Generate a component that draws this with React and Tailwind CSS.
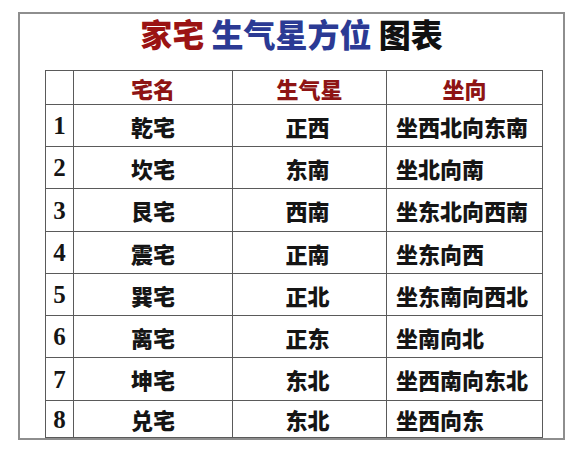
import React from 'react';

const rows = [
    ['1', '乾宅', '正西', '坐西北向东南'],
    ['2', '坎宅', '东南', '坐北向南'],
    ['3', '艮宅', '西南', '坐东北向西南'],
    ['4', '震宅', '正南', '坐东向西'],
    ['5', '巽宅', '正北', '坐东南向西北'],
    ['6', '离宅', '正东', '坐南向北'],
    ['7', '坤宅', '东北', '坐西南向东北'],
    ['8', '兑宅', '东北', '坐西向东'],
];

const heights = ['h-[42px]', 'h-[42px]', 'h-[43px]', 'h-[42px]', 'h-[42px]', 'h-[42px]', 'h-[43px]', 'h-[37px]'];

const cjk = { fontFamily: '"Noto Sans CJK SC", sans-serif' };
const serif = { fontFamily: '"Liberation Serif", "Noto Sans CJK SC", serif' };

export default function App() {
    return (
        <div className="w-[574px] h-[449px] bg-white pt-[12px] pl-[18px]">
            <div className="w-[547px] h-[428px] border-2 border-[#8e8e8e] flex flex-col">
                {/* Title */}
                <div
                    className="h-[56px] pt-[3px] text-center text-[32px] leading-[32px] font-black"
                    style={cjk}
                >
                    <span className="text-[#9b1313]">家宅</span>
                    <span className="text-[#2b3a94]"> 生气星方位</span>
                    <span className="text-[#111]"> 图表</span>
                </div>

                <table
                    className="ml-[25px] w-[497px] border-collapse table-fixed text-[22px] font-black text-[#151515]"
                    style={cjk}
                >
                    <colgroup>
                        <col className="w-[28px]" />
                        <col className="w-[159px]" />
                        <col className="w-[154px]" />
                        <col className="w-[156px]" />
                    </colgroup>
                    <thead>
                        <tr className="h-[34px] text-[#8e1414]">
                            <th className="border border-[#5a5a5a] p-0" />
                            <th className="border border-[#5a5a5a] p-0 font-black leading-none">宅名</th>
                            <th className="border border-[#5a5a5a] p-0 font-black leading-none">生气星</th>
                            <th className="border border-[#5a5a5a] p-0 font-black leading-none">坐向</th>
                        </tr>
                    </thead>
                    <tbody>
                        {rows.map((r, i) => (
                            <tr key={r[0]} className={heights[i]}>
                                <td className="border border-[#5a5a5a] p-0 text-center text-[25px] font-bold leading-none" style={serif}>
                                    {r[0]}
                                </td>
                                <td className="border border-[#5a5a5a] p-0 text-center leading-none">{r[1]}</td>
                                <td className="border border-[#5a5a5a] p-0 text-center leading-none pr-[4px]">{r[2]}</td>
                                <td className="border border-[#5a5a5a] p-0 pl-[9px] leading-none whitespace-nowrap">{r[3]}</td>
                            </tr>
                        ))}
                    </tbody>
                </table>
            </div>
        </div>
    );
}
